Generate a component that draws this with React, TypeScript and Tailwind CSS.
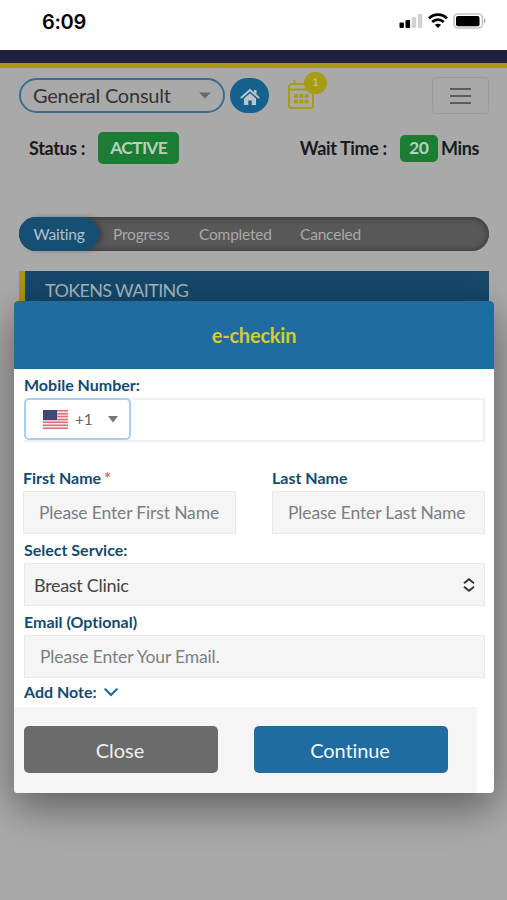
import React from "react";

function StatusBar() {
  return (
    <div className="flex h-[50px] items-start justify-between bg-white pl-[42px] pr-[21px] font-['Inter',sans-serif]">
      <span className="mt-[10px] text-[20px] leading-6 font-semibold tracking-[-0.3px] text-black">6:09</span>
      <div className="mt-[13px] flex items-start">
        <svg width="24" height="16" viewBox="0 0 24 16">
          <rect x="0.500" y="9.500" width="4.400" height="5.500" rx="1" fill="#000" />
          <rect x="6.500" y="7" width="4.600" height="8" rx="1" fill="#000" />
          <rect x="12.800" y="4" width="4.400" height="11" rx="1" fill="#d2d2d2" />
          <rect x="18.900" y="1" width="4.400" height="14" rx="1" fill="#d2d2d2" />
        </svg>
        <svg className="ml-[5px]" width="20" height="16" viewBox="0 0 20 16" fill="none" stroke="#000" strokeWidth="2.700">
          <path d="M1 5.400C6 .4 14 .4 19 5.400" />
          <path d="M4.200 9C7.600 5.900 12.400 5.900 15.800 9" />
          <path d="M10 14.900 6.900 11.800C8.700 10.400 11.300 10.400 13.100 11.800Z" fill="#000" stroke="none" />
        </svg>
        <svg className="ml-[5px]" width="33" height="16" viewBox="0 0 33 16">
          <rect x="1" y="1" width="28.500" height="14" rx="4" fill="#fff" stroke="#c4c4c4" strokeWidth="1.600" />
          <rect x="3" y="3" width="23.500" height="10.300" rx="2" fill="#000" />
          <path d="M31 5.500c2 .8 2 4.200 0 5z" fill="#aaa" />
        </svg>
      </div>
    </div>
  );
}

function Toolbar() {
  return (
    <div className="flex h-[38px] items-center pl-[19px] pr-[18px]">
      <div className="-mt-[2px] flex h-[35px] w-[206px] items-center justify-between rounded-full border-2 border-[#386f91] pl-[12px] pr-[12px]">
        <span className="text-[20px] leading-none tracking-[-0.22px] text-[#333]">General Consult</span>
        <svg width="12" height="7" viewBox="0 0 12 7"><path d="M0 .5h12L6 6.500z" fill="#6a6a6a" /></svg>
      </div>
      <div className="-mt-[1px] ml-[5px] flex h-[35px] w-[39px] items-center justify-center rounded-full bg-[#16608d]">
        <svg className="mt-[2px]" width="20" height="18" viewBox="0 0 20 18">
          <path d="M1.500 9.500 10 2l8.500 7.500" fill="none" stroke="#bcc5ca" strokeWidth="2" strokeLinecap="round" />
          <path d="M14 2h2.500v4.500L14 4.300z" fill="#bcc5ca" />
          <path d="M4 10.500 10 5.200l6 5.300V17h-4.300v-4.500H8.300V17H4z" fill="#bcc5ca" />
        </svg>
      </div>
      <div className="relative ml-[19px] h-[32px] w-[28px]">
        <svg className="-mt-[2px]" width="28" height="32" viewBox="0 0 28 32" fill="none" stroke="#a79c14" strokeWidth="2">
          <rect x="1" y="6" width="24" height="24" rx="2.500" />
          <path d="M1 11.500h24M6.500 2v4.500" />
          <g fill="#a79c14" stroke="none">
            <rect x="6" y="16" width="4" height="4" rx="1" />
            <rect x="11.300" y="16" width="4" height="4" rx="1" />
            <rect x="16.600" y="16" width="4" height="4" rx="1" />
            <rect x="6" y="21.500" width="4" height="4" rx="1" />
            <rect x="11.300" y="21.500" width="4" height="4" rx="1" />
            <rect x="16.600" y="21.500" width="4" height="4" rx="1" />
          </g>
        </svg>
        <span className="absolute -top-[8px] left-[16px] flex h-[22px] w-[23px] items-center justify-center rounded-full bg-[#a79c14] pb-[2px] text-[12px] leading-none text-[#c9c47c]">1</span>
      </div>
      <div className="-mt-[1px] ml-auto flex h-[37px] w-[57px] flex-col items-center justify-center gap-[5px] rounded-[4px] border border-[#9a9b9e]">
        <span className="h-[2px] w-[21px] bg-[#5c5c5c]" />
        <span className="h-[2px] w-[21px] bg-[#5c5c5c]" />
        <span className="h-[2px] w-[21px] bg-[#5c5c5c]" />
      </div>
    </div>
  );
}

function Flag() {
  return (
    <svg width="25" height="19" viewBox="0 0 25 19">
      <rect width="25" height="19" fill="#f4e9eb" />
      <path d="M0 .75h25M0 3.650h25M0 6.550h25M0 9.450h25M0 12.350h25M0 15.250h25M0 18.150h25" stroke="#d96f7b" strokeWidth="1.500" />
      <rect width="14" height="10" fill="#3b4874" />
      <path d="M2 2.500h11M2 5h11M2 7.500h11" stroke="#4f5b86" strokeWidth=".8" strokeDasharray="1 1.500" />
    </svg>
  );
}

function Label({ children }: { children: React.ReactNode }) {
  return <div className="flex h-[28px] items-center text-[16px] leading-none font-bold text-[#144a70]">{children}</div>;
}

function Field({ text }: { text: string }) {
  return (
    <div className="flex h-[43px] items-center border border-[#e9e9e9] bg-[#f5f5f5] pt-px pl-[15px] text-[17.5px] leading-none tracking-[-0.15px] whitespace-nowrap text-[#7c7f81]">
      {text}
    </div>
  );
}

function CheckinDialog() {
  return (
    <div className="absolute top-[301px] left-[14px] flex h-[492px] w-[480px] flex-col overflow-hidden rounded-[4px] bg-white shadow-[0_14px_42px_0_rgba(0,0,0,0.45)]">
      <div className="flex h-[68px] shrink-0 items-center justify-center bg-[#206ca0] text-[20px] font-bold tracking-[-0.2px] text-[#d3cd2f]">
        e-checkin
      </div>
      <div className="flex h-[338px] shrink-0 flex-col pr-[9px] pl-[10px]">
        <div className="pt-[2px]"><Label>Mobile Number:</Label></div>
        <div className="-mt-[1px] flex h-[44px] shrink-0 items-start border-2 border-l-0 border-[#f0f0f0]">
          <div className="-mt-[2px] flex h-[42px] w-[107px] items-center rounded-[5px] border-2 border-[#a9cdf6] pl-[17px] text-[#666]">
            <Flag />
            <span className="mt-[2px] ml-[7px] text-[15.500px] leading-none tracking-[-0.3px]">+1</span>
            <svg className="mr-[11px] ml-auto" width="10" height="7" viewBox="0 0 10 7"><path d="M0 0h10L5 6.500z" fill="#777" /></svg>
          </div>
        </div>
        <div className="-ml-px mt-[21px] flex gap-[36px]">
          <div className="w-[213px]">
            <div className="-mb-px pt-px"><Label>First Name <span className="ml-[3px] text-[17px] font-bold text-[#e86570]">*</span></Label></div>
            <Field text="Please Enter First Name" />
          </div>
          <div className="w-[213px]">
            <div className="-mb-px pt-px"><Label>Last Name</Label></div>
            <Field text="Please Enter Last Name" />
          </div>
        </div>
        <div className="-mb-px pt-[2px]"><Label>Select Service:</Label></div>
        <div className="flex h-[43px] shrink-0 items-center justify-between border border-[#e9e9e9] bg-[#f5f5f5] pr-[9px] pl-[9px] text-[18px] leading-none tracking-[-0.3px] text-[#444]">
          Breast Clinic
          <svg width="12" height="14" viewBox="0 0 12 14" fill="none" stroke="#333" strokeWidth="1.800">
            <path d="M1 5.200 6 1.200l5 4M1 8.800l5 4 5-4" />
          </svg>
        </div>
        <div className="-mb-px pt-[2px]"><Label>Email (Optional)</Label></div>
        <Field text="Please Enter Your Email." />
        <Label>
          Add Note:
          <svg className="ml-[7px]" width="14" height="9" viewBox="0 0 14 9" fill="none" stroke="#1f6ba0" strokeWidth="2.200" strokeLinecap="round">
            <path d="m1.300 1.300 5.700 5.700 5.700-5.700" />
          </svg>
        </Label>
      </div>
      <div className="flex w-[463px] flex-1 items-start gap-[36px] bg-[#f5f5f5] pt-[19px] pl-[10px] text-[20px]">
        <button className="h-[47px] w-[194px] rounded-[5px] bg-[#6b6b6b] pt-px pr-[2px] leading-none text-[#eee]">Close</button>
        <button className="h-[47px] w-[194px] rounded-[5px] bg-[#206ca0] pt-px pr-[2px] leading-none tracking-[-0.1px] text-[#ebf8ff]">Continue</button>
      </div>
    </div>
  );
}

export default function App() {
  return (
    <div className="relative flex h-[900px] w-[507px] flex-col overflow-hidden bg-[#a9a9a9] font-['Lato',sans-serif] [font-variant-ligatures:none]">
      <StatusBar />
      <div className="mb-[9px] h-[18px] shrink-0 border-b-[5px] border-[#a79712] bg-[#20203f]" />
      <Toolbar />
      <div className="mt-[17px] flex h-[33px] items-center pr-[28px] pl-[29px] text-[18px] leading-none font-bold tracking-[-0.35px] text-[#1b1b1b]">
        <span className="-mt-px">Status :</span>
        <span className="-mt-px ml-[13px] flex h-[32px] w-[81px] items-center justify-center rounded-[5px] bg-[#1b7d34] text-[17.500px] tracking-[-0.7px] text-[#b6d0bc]">ACTIVE</span>
        <span className="-mt-px ml-auto">Wait Time :</span>
        <span className="-mt-px ml-[13px] flex h-[27px] w-[38px] items-center justify-center rounded-[5px] bg-[#1b7d34] text-[17.500px] text-[#b6d0bc]">20</span>
        <span className="-mt-px ml-[3px]">Mins</span>
      </div>
      <div className="mt-[52px] ml-[19px] flex h-[34px] w-[470px] shrink-0 items-center rounded-full bg-[#585858] text-[15.500px] leading-none tracking-[-0.2px] text-[#a9a9a9] shadow-[inset_0_0_6px_0_#303030]">
        <span className="flex h-[34px] w-[80px] items-center justify-center rounded-full bg-[#174f73] pt-[2px] text-[#b0c0cc] shadow-[5px_0_7px_-3px_#333]">Waiting</span>
        <span className="ml-[14px] w-[86px] pt-[2px]">Progress</span>
        <span className="w-[101px] pt-[2px]">Completed</span>
        <span className="pt-[2px]">Canceled</span>
      </div>
      <div className="mt-[20px] ml-[19px] flex h-[38px] w-[470px] shrink-0 items-center border-l-[6px] border-[#a79712] bg-[#15486a] pl-[20px] text-[18px] leading-none tracking-[-0.65px] text-[#a6b5bf]">
        TOKENS WAITING
      </div>
      <CheckinDialog />
    </div>
  );
}
